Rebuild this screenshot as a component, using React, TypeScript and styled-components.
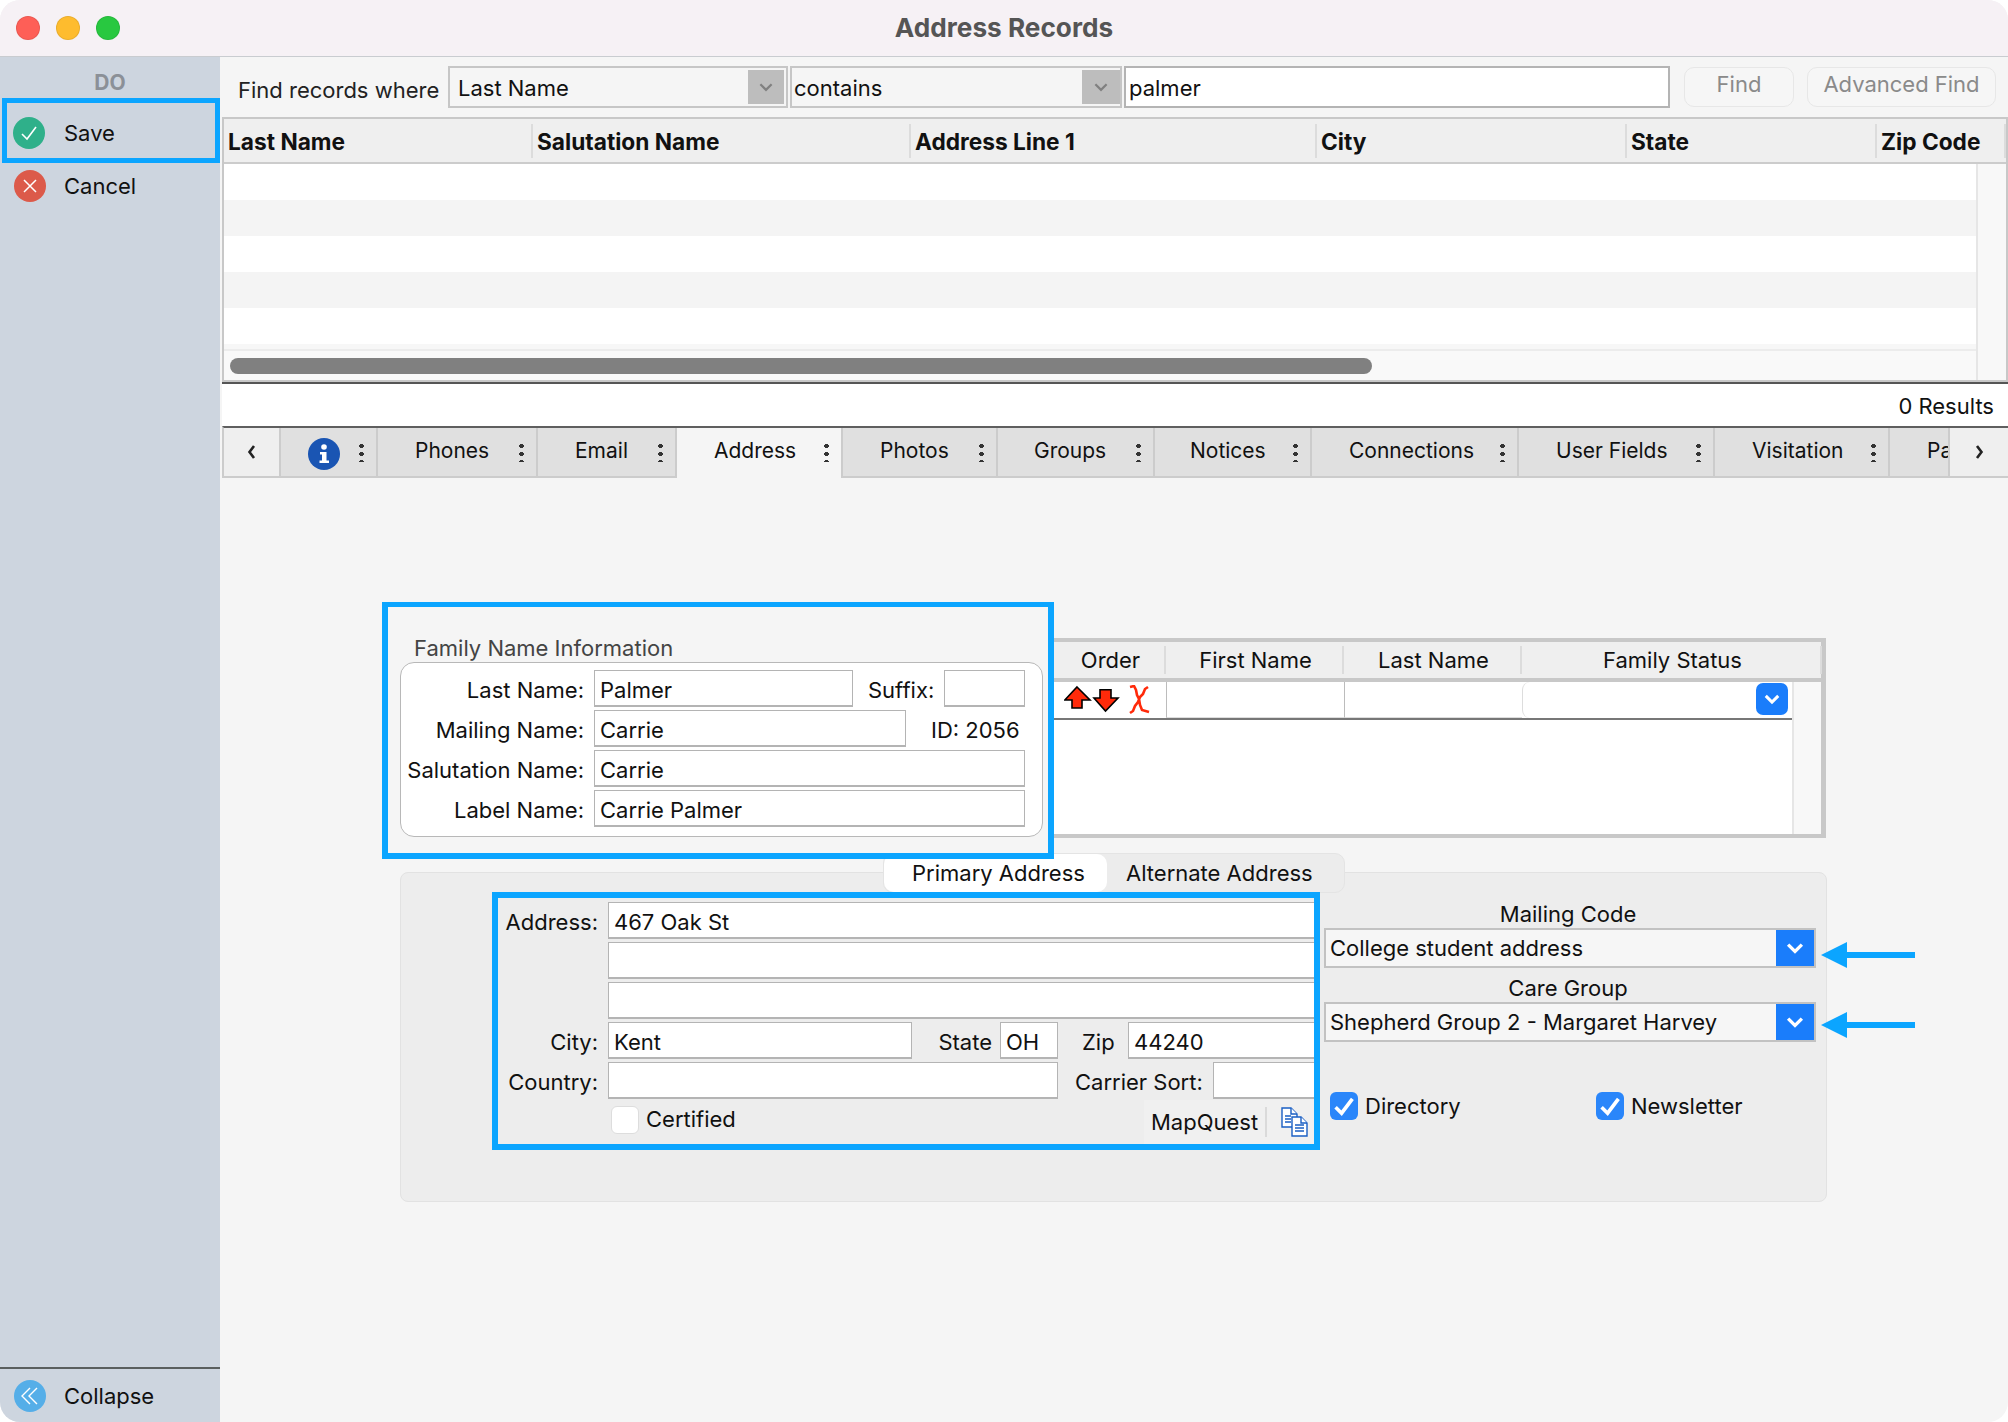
import * as React from 'react';
import styled, { createGlobalStyle } from 'styled-components';

const BLUE = '#0ba5ff';
const FONT = 'Inter, "Liberation Sans", sans-serif';

const GlobalStyle = createGlobalStyle`
  html, body { margin: 0; padding: 0; background: #fff; }
  body { font-family: ${FONT}; color: #111; font-size: 22px; }
  * { box-sizing: border-box; }
`;

const Window = styled.div`
  width: 2008px;
  height: 1422px;
  display: flex;
  flex-direction: column;
  border-radius: 20px;
  overflow: hidden;
  background: #f5f5f5;
`;

const TitleBar = styled.div`
  height: 57px;
  flex: none;
  display: flex;
  align-items: center;
  padding-left: 16px;
  background: #f6f1f5;
  border-bottom: 1px solid #c9ccd0;
`;

const Light = styled.span<{ $color: string }>`
  width: 24px;
  height: 24px;
  margin-right: 16px;
  border-radius: 50%;
  background: ${p => p.$color};
  border: 1px solid rgba(0, 0, 0, 0.08);
`;

const Title = styled.div`
  flex: 1;
  text-align: center;
  margin-left: -136px;
  padding-bottom: 2px;
  font-size: 26.2px;
  font-weight: 700;
  color: #555;
`;

const Body = styled.div`
  flex: 1;
  display: flex;
  min-height: 0;
`;

const Sidebar = styled.div`
  width: 220px;
  flex: none;
  display: flex;
  flex-direction: column;
  background: #cdd5df;
`;

const SideHeading = styled.div`
  height: 41px;
  line-height: 52px;
  text-align: center;
  font-size: 21px;
  font-weight: 700;
  color: #8b9097;
`;

const SideItem = styled.div<{ $marked?: boolean }>`
  display: flex;
  align-items: center;
  gap: ${p => (p.$marked ? '19px' : '18px')};
  height: ${p => (p.$marked ? '65px' : '46px')};
  margin-left: ${p => (p.$marked ? '2px' : '0')};
  padding-left: ${p => (p.$marked ? '6px' : '14px')};
  padding-top: ${p => (p.$marked ? '5px' : '0')};
  border: ${p => (p.$marked ? `5px solid ${BLUE}` : 'none')};
`;

const Dot = styled.span<{ $color: string }>`
  width: 32px;
  height: 32px;
  flex: none;
  border-radius: 50%;
  background: ${p => p.$color};
  display: flex;
  align-items: center;
  justify-content: center;
`;

const SideSpacer = styled.div`
  flex: 1;
`;

const CollapseRow = styled.div`
  height: 55px;
  flex: none;
  display: flex;
  align-items: center;
  gap: 18px;
  padding: 0 0 0 14px;
  border-top: 2px solid #5a5f5f;
`;

const Main = styled.div`
  flex: 1;
  min-width: 0;
  display: flex;
  flex-direction: column;
`;

const FindRow = styled.div`
  height: 60px;
  flex: none;
  display: flex;
  align-items: flex-start;
  padding: 9px 12px 0 18px;
`;

const FindLabel = styled.div`
  width: 210px;
  height: 42px;
  line-height: 48px;
  color: #222;
  white-space: nowrap;
`;

const FindSelect = styled.div<{ $w: number; $pad: number; $inset: number }>`
  width: ${p => p.$w}px;
  height: 42px;
  margin-right: 2px;
  display: flex;
  align-items: center;
  justify-content: space-between;
  padding: 2px ${p => p.$inset}px 0 ${p => p.$pad}px;
  background: #f5f5f5;
  border: 2px solid #c6c6c6;
`;

const FindArrow = styled.span<{ $w: number }>`
  width: ${p => p.$w}px;
  height: 34px;
  flex: none;
  margin-top: -2px;
  display: flex;
  align-items: center;
  justify-content: center;
  background: #bdbdbd;
`;

const FindInput = styled.div`
  width: 546px;
  height: 42px;
  line-height: 40px;
  padding-left: 3px;
  background: #fff;
  border: 2px solid #b4b4b4;
`;

const FindButton = styled.div<{ $w: number }>`
  width: ${p => p.$w}px;
  height: 40px;
  margin-left: ${p => (p.$w > 150 ? '13px' : '14px')};
  margin-top: 1px;
  line-height: 32px;
  text-align: center;
  color: #8a8a8a;
  background: #f6f6f6;
  border: 1px solid #e7e7e7;
  border-radius: 10px;
`;

const Grid = styled.div`
  height: 265px;
  flex: none;
  margin-left: 2px;
  display: flex;
  flex-direction: column;
  border: 2px solid #c8c8c8;
`;

const GridHead = styled.div`
  height: 45px;
  flex: none;
  display: flex;
  align-items: center;
  background: #efefef;
  border-bottom: 2px solid #cccccc;
`;

const HeadCell = styled.div<{ $w: number }>`
  width: ${p => p.$w}px;
  flex: none;
  height: 34px;
  line-height: 36px;
  padding-left: 4px;
  font-size: 22.7px;
  font-weight: 700;
  white-space: nowrap;
  border-right: 2px solid #dcdcdc;
`;

const GridBody = styled.div`
  flex: 1;
  display: flex;
  min-height: 0;
`;

const RowsPane = styled.div`
  flex: 1;
  min-width: 0;
  display: flex;
  flex-direction: column;
`;

const GridRow = styled.div<{ $odd: boolean }>`
  height: 36px;
  flex: none;
  background: ${p => (p.$odd ? '#f4f4f4' : '#fff')};
`;

const ScrollGap = styled.div`
  height: 7px;
  flex: none;
  background: #f7f7f7;
  border-bottom: 2px solid #ececec;
`;

const HScroll = styled.div`
  flex: 1;
  padding: 7px 0 0 6px;
  background: #f9f9f9;
`;

const HThumb = styled.div`
  width: 1142px;
  height: 16px;
  border-radius: 8px;
  background: #808080;
`;

const VTrack = styled.div`
  width: 30px;
  flex: none;
  background: #f8f8f8;
  border-left: 2px solid #e6e6e6;
`;

const ResultsBar = styled.div`
  height: 44px;
  flex: none;
  margin-left: 2px;
  display: flex;
  align-items: center;
  justify-content: flex-end;
  padding: 2px 14px 0 0;
  background: #fff;
  border-top: 2px solid #555;
`;

const TabBar = styled.div`
  height: 52px;
  flex: none;
  margin-left: 2px;
  display: flex;
  background: #e0e0e0;
  border-top: 2px solid #5f5f5f;
  border-bottom: 2px solid #cccccc;
  border-left: 2px solid #cccccc;
`;

const Tab = styled.div<{ $w: number; $active?: boolean; $pad?: number }>`
  width: ${p => p.$w}px;
  flex: none;
  display: flex;
  align-items: center;
  padding: 0 12px ${p => (p.$active ? 6 : 4)}px ${p => p.$pad ?? 37}px;
  overflow: hidden;
  white-space: nowrap;
  font-size: 21px;
  background: ${p => (p.$active ? '#f5f5f5' : '#e0e0e0')};
  border-right: 2px solid #cccccc;
  margin-bottom: ${p => (p.$active ? '-2px' : '0')};
`;

const NavTab = styled.div<{ $w: number; $last?: boolean }>`
  width: ${p => p.$w}px;
  flex: none;
  display: flex;
  align-items: center;
  justify-content: center;
  background: #efefef;
  border-right: ${p => (p.$last ? 'none' : '2px solid #cccccc')};
`;

const InfoSlot = styled.span`
  display: flex;
  margin-top: 8px;
`;

const Dots = styled.span`
  width: 5px;
  height: 20px;
  flex: none;
  margin: 4px 0 0 auto;
  background: radial-gradient(circle, #333 2.1px, transparent 2.5px) center top / 5px 8px repeat-y;
`;

const Content = styled.div`
  flex: 1;
  display: flex;
  flex-direction: column;
  padding: 124px 0 0 162px;
`;

const TopRow = styled.div`
  display: flex;
  align-items: flex-start;
`;

const FamilyBox = styled.div`
  width: 672px;
  height: 257px;
  flex: none;
  padding: 0 6px;
  border: 6px solid ${BLUE};
  border-top-width: 5px;
  position: relative;
  z-index: 1;
`;

const FamilyTitle = styled.div`
  height: 55px;
  padding: 29px 0 0 20px;
  line-height: 24px;
  color: #444;
`;

const FamilyPanel = styled.div`
  width: 643px;
  height: 175px;
  margin-left: 6px;
  padding-top: 7px;
  background: #fff;
  border: 1px solid #b8b8b8;
  border-radius: 14px;
`;

const FormRow = styled.div`
  display: flex;
  align-items: center;
  height: 37px;
  margin-bottom: 3px;
`;

const FormLabel = styled.div<{ $w: number; $gap: number; $left?: number }>`
  width: ${p => p.$w}px;
  flex: none;
  margin-left: ${p => p.$left ?? 0}px;
  margin-right: ${p => p.$gap}px;
  padding-top: 2px;
  text-align: right;
  white-space: nowrap;
`;

const Field = styled.div<{ $w?: number; $open?: boolean }>`
  width: ${p => (p.$w ? `${p.$w}px` : 'auto')};
  flex: ${p => (p.$w ? 'none' : 1)};
  height: 37px;
  line-height: 38px;
  padding-left: 5px;
  background: #fff;
  border: 1px solid #b4b4b4;
  border-bottom-width: 2px;
  border-right-width: ${p => (p.$open ? 0 : 1)}px;
`;

const IdLabel = styled.div`
  margin-left: 25px;
  padding-top: 2px;
  white-space: nowrap;
`;

const ChildGrid = styled.div`
  width: 772px;
  height: 200px;
  flex: none;
  margin-top: 36px;
  display: flex;
  flex-direction: column;
  border: 5px solid #c8c8c8;
  border-top-width: 4px;
  border-bottom-width: 4px;
  border-left: none;
`;

const ChildHead = styled.div`
  height: 40px;
  flex: none;
  display: flex;
  align-items: center;
  background: #efefef;
  border-bottom: 4px solid #c8c8c8;
`;

const ChildHeadCell = styled.div<{ $w: number }>`
  width: ${p => p.$w}px;
  flex: none;
  height: 28px;
  line-height: 28px;
  padding-left: 3px;
  text-align: center;
  border-right: 2px solid #dcdcdc;
`;

const ChildBody = styled.div`
  flex: 1;
  display: flex;
  min-height: 0;
`;

const ChildRows = styled.div`
  flex: 1;
  min-width: 0;
  background: #fff;
`;

const ChildRow = styled.div`
  height: 38px;
  display: flex;
  border-bottom: 2px solid #777;
`;

const OrderCell = styled.div`
  width: 112px;
  flex: none;
  display: flex;
  align-items: center;
  padding-left: 10px;
  background: #fff;
`;

const ChildCell = styled.div`
  width: 178px;
  flex: none;
  background: #fff;
  border-left: 1px solid #bcbcbc;
  border-bottom: 1px solid #ddd;
`;

const StatusCell = styled.div`
  flex: 1;
  display: flex;
  justify-content: flex-end;
  padding: 1px 4px 0 0;
  border-left: 1px solid #ddd;
  border-radius: 8px;
`;

const StatusButton = styled.span`
  width: 32px;
  height: 32px;
  display: flex;
  align-items: center;
  justify-content: center;
  background: #1a7dfb;
  border-radius: 7px;
`;

const ChildTrack = styled.div`
  width: 29px;
  flex: none;
  background: #f8f8f8;
  border-left: 2px solid #e6e6e6;
`;

const Panel = styled.div`
  width: 1427px;
  height: 330px;
  flex: none;
  margin: 13px 0 0 18px;
  padding: 19px 0 0 91px;
  display: flex;
  align-items: flex-start;
  background: #ededed;
  border: 1px solid #e2e2e2;
  border-radius: 8px;
  position: relative;
`;

const SubTabs = styled.div`
  position: absolute;
  left: 482px;
  top: -20px;
  width: 462px;
  height: 40px;
  display: flex;
  align-items: center;
  background: #ececec;
  border: 1px solid #e4e4e4;
  border-radius: 10px;
`;

const SubTab = styled.div<{ $active?: boolean; $w: number; $pad: number }>`
  width: ${p => p.$w}px;
  height: 38px;
  line-height: 39px;
  padding-left: ${p => p.$pad}px;
  white-space: nowrap;
  background: ${p => (p.$active ? '#fff' : 'transparent')};
  border-radius: 10px;
`;

const AddressBox = styled.div`
  width: 828px;
  height: 258px;
  flex: none;
  padding-top: 4px;
  border: 6px solid ${BLUE};
  position: relative;
  z-index: 1;
`;

const LastRow = styled.div`
  display: flex;
  align-items: flex-start;
  margin-top: 1px;
  padding-left: 113px;
`;

const CheckBlank = styled.span`
  width: 28px;
  height: 28px;
  flex: none;
  margin-top: 4px;
  background: #fff;
  border: 1px solid #ddd;
  border-radius: 6px;
`;

const CertifiedLabel = styled.span`
  margin-left: 7px;
  margin-top: 4px;
  flex: 1;
`;

const MapQuestBtn = styled.div`
  width: 170px;
  height: 44px;
  flex: none;
  margin-top: -2px;
  display: flex;
  align-items: center;
  padding-left: 7px;
  background: #f0f0f0;
`;

const BtnDivider = styled.span`
  width: 2px;
  height: 30px;
  margin: 0 14px 0 7px;
  background: #dadada;
`;

const RightCol = styled.div`
  width: 492px;
  flex: none;
  margin-left: 4px;
  padding-top: 9px;
`;

const SelectCaption = styled.div`
  height: 27px;
  line-height: 26px;
  padding-right: 4px;
  text-align: center;
`;

const ComboBox = styled.div`
  height: 40px;
  margin-bottom: 7px;
  display: flex;
  align-items: center;
  justify-content: space-between;
  padding-left: 4px;
  background: #f6f6f6;
  border: 2px solid #c2c2c2;
  white-space: nowrap;
  position: relative;
`;

const ComboArrow = styled.span`
  width: 38px;
  height: 36px;
  flex: none;
  display: flex;
  align-items: center;
  justify-content: center;
  background: #1a7dfb;
`;

const Callout = styled.svg<{ $top: number }>`
  position: absolute;
  left: 495px;
  top: ${p => p.$top}px;
`;

const CheckRow = styled.div`
  display: flex;
  margin-top: 50px;
  padding-left: 6px;
`;

const CheckItem = styled.div`
  width: 266px;
  flex: none;
  display: flex;
  align-items: center;
  gap: 7px;
`;

const CheckOn = styled.span`
  width: 28px;
  height: 28px;
  flex: none;
  display: flex;
  align-items: center;
  justify-content: center;
  background: #2a86fa;
  border-radius: 6px;
`;

const Check = ({ size = 20, w = 1.6 }: { size?: number; w?: number }) => (
  <svg width={size} height={size} viewBox="0 0 20 20" fill="none" stroke="#fff" strokeWidth={w}>
    <path d="M3 11 L8 16 L17 4" />
  </svg>
);

const Cross = () => (
  <svg width="20" height="20" viewBox="0 0 20 20" fill="none" stroke="#fff" strokeWidth="1.5">
    <path d="M4 4 L16 16 M16 4 L4 16" />
  </svg>
);

const Chevrons = () => (
  <svg width="22" height="22" viewBox="0 0 22 22" fill="none" stroke="#fff" strokeWidth="1.4">
    <path d="M11 3 L3 11 L11 19 M18 3 L10 11 L18 19" />
  </svg>
);

const InfoIcon = () => (
  <svg width="32" height="32" viewBox="0 0 32 32">
    <circle cx="16" cy="16" r="16" fill="#1a55b3" />
    <circle cx="16" cy="9" r="2.8" fill="#fff" />
    <path d="M12 14 H18.5 V22.5 H21 V25 H11.5 V22.5 H14 V16.5 H12 Z" fill="#fff" />
  </svg>
);

const Chevron = ({ color = '#fff', size = 20, w = 2.4 }: { color?: string; size?: number; w?: number }) => (
  <svg width={size} height={size} viewBox="0 0 16 16" fill="none" stroke={color} strokeWidth={w}>
    <path d="M3 5.5 L8 10.5 L13 5.5" />
  </svg>
);

const NavArrow = ({ dir }: { dir: 'left' | 'right' }) => (
  <svg width="9" height="14" viewBox="0 0 9 14" fill="none" stroke="#222" strokeWidth="2.6">
    <path d={dir === 'left' ? 'M7 1 L2.5 7 L7 13' : 'M2 1 L6.5 7 L2 13'} />
  </svg>
);

const OrderIcons = () => (
  <svg width="87" height="30" viewBox="0 0 87 30">
    <path d="M13 2 L26 15 H18 V23 H8 V15 H0.8 Z" fill="#ff2a0a" stroke="#000" strokeWidth="1.6" />
    <path d="M36 4.8 H47 V13 H54 L41.5 26 L30 13 H36 Z" fill="#ff2a0a" stroke="#000" strokeWidth="1.6" />
    <path d="M66 2 L70 1 L72 5 L73 10 L75 14 L76 20 L78 25 L85 27 M84 2 L81 4 L79 9 L76 12 L74 17 L71 21 L69 26 L66 28" fill="none" stroke="#ff2a0a" strokeWidth="2.6" />
  </svg>
);

const DocsIcon = () => (
  <svg width="28" height="30" viewBox="0 0 28 30" fill="#fff" stroke="#1a5fc4" strokeWidth="1.4">
    <path d="M1 1 H10 L16 7 V20 H1 Z" />
    <path d="M10 1 V7 H16" />
    <path d="M4 9 H10 M4 12 H10 M4 15 H10" strokeWidth="1.6" />
    <path d="M11 10 H20 L26 16 V29 H11 Z" />
    <path d="M20 10 V16 H26" />
    <path d="M14 18 H23 M14 21 H23 M14 24 H23" strokeWidth="1.6" />
  </svg>
);

const ArrowMark = ({ top }: { top: number }) => (
  <Callout $top={top} width="94" height="26" viewBox="0 0 94 26">
    <path d="M0 13 L26 0 V10 H94 V16 H26 V26 Z" fill={BLUE} />
  </Callout>
);

const COLUMNS = [
  { name: 'Last Name', w: 309 },
  { name: 'Salutation Name', w: 378 },
  { name: 'Address Line 1', w: 406 },
  { name: 'City', w: 310 },
  { name: 'State', w: 250 },
  { name: 'Zip Code', w: 129 },
];

const TABS = [
  { name: 'Phones', w: 160 },
  { name: 'Email', w: 139 },
  { name: 'Address', w: 166, active: true },
  { name: 'Photos', w: 155 },
  { name: 'Groups', w: 157, pad: 36 },
  { name: 'Notices', w: 157, pad: 35 },
  { name: 'Connections', w: 207 },
  { name: 'User Fields', w: 196 },
  { name: 'Visitation', w: 175 },
];

export default function App() {
  return (
    <>
      <GlobalStyle />
      <Window>
        <TitleBar>
          <Light $color="#fe5f57" />
          <Light $color="#febc2e" />
          <Light $color="#28c840" />
          <Title>Address Records</Title>
        </TitleBar>
        <Body>
          <Sidebar>
            <SideHeading>DO</SideHeading>
            <SideItem $marked>
              <Dot $color="#2fb08a"><Check /></Dot>
              Save
            </SideItem>
            <SideItem>
              <Dot $color="#dc5a4a"><Cross /></Dot>
              Cancel
            </SideItem>
            <SideSpacer />
            <CollapseRow>
              <Dot $color="#55aee8"><Chevrons /></Dot>
              Collapse
            </CollapseRow>
          </Sidebar>
          <Main>
            <FindRow>
              <FindLabel>Find records where</FindLabel>
              <FindSelect $w={340} $pad={8} $inset={2}>
                Last Name
                <FindArrow $w={36}><Chevron color="#808080" size={18} w={2} /></FindArrow>
              </FindSelect>
              <FindSelect $w={332} $pad={2} $inset={0}>
                contains
                <FindArrow $w={38}><Chevron color="#808080" size={18} w={2} /></FindArrow>
              </FindSelect>
              <FindInput>palmer</FindInput>
              <FindButton $w={110}>Find</FindButton>
              <FindButton $w={189}>Advanced Find</FindButton>
            </FindRow>
            <Grid>
              <GridHead>
                {COLUMNS.map(c => (
                  <HeadCell key={c.name} $w={c.w}>{c.name}</HeadCell>
                ))}
              </GridHead>
              <GridBody>
                <RowsPane>
                  {[0, 1, 2, 3, 4].map(i => (
                    <GridRow key={i} $odd={i % 2 === 1} />
                  ))}
                  <ScrollGap />
                  <HScroll><HThumb /></HScroll>
                </RowsPane>
                <VTrack />
              </GridBody>
            </Grid>
            <ResultsBar>0 Results</ResultsBar>
            <TabBar>
              <NavTab $w={57}><NavArrow dir="left" /></NavTab>
              <Tab $w={97} $pad={27}><InfoSlot><InfoIcon /></InfoSlot><Dots /></Tab>
              {TABS.map(t => (
                <Tab key={t.name} $w={t.w} $active={t.active} $pad={t.pad}>
                  {t.name}
                  <Dots />
                </Tab>
              ))}
              <Tab $w={60}>Pa</Tab>
              <NavTab $w={58} $last><NavArrow dir="right" /></NavTab>
            </TabBar>
            <Content>
              <TopRow>
                <FamilyBox>
                  <FamilyTitle>Family Name Information</FamilyTitle>
                  <FamilyPanel>
                    <FormRow>
                      <FormLabel $w={183} $gap={10}>Last Name:</FormLabel>
                      <Field $w={259}>Palmer</Field>
                      <FormLabel $w={66} $gap={10} $left={15}>Suffix:</FormLabel>
                      <Field $w={81} />
                    </FormRow>
                    <FormRow>
                      <FormLabel $w={183} $gap={10}>Mailing Name:</FormLabel>
                      <Field $w={312}>Carrie</Field>
                      <IdLabel>ID: 2056</IdLabel>
                    </FormRow>
                    <FormRow>
                      <FormLabel $w={183} $gap={10}>Salutation Name:</FormLabel>
                      <Field $w={431}>Carrie</Field>
                    </FormRow>
                    <FormRow>
                      <FormLabel $w={183} $gap={10}>Label Name:</FormLabel>
                      <Field $w={431}>Carrie Palmer</Field>
                    </FormRow>
                  </FamilyPanel>
                </FamilyBox>
                <ChildGrid>
                  <ChildHead>
                    <ChildHeadCell $w={112}>Order</ChildHeadCell>
                    <ChildHeadCell $w={178}>First Name</ChildHeadCell>
                    <ChildHeadCell $w={178}>Last Name</ChildHeadCell>
                    <ChildHeadCell $w={300}>Family Status</ChildHeadCell>
                  </ChildHead>
                  <ChildBody>
                    <ChildRows>
                      <ChildRow>
                        <OrderCell><OrderIcons /></OrderCell>
                        <ChildCell />
                        <ChildCell />
                        <StatusCell>
                          <StatusButton><Chevron /></StatusButton>
                        </StatusCell>
                      </ChildRow>
                    </ChildRows>
                    <ChildTrack />
                  </ChildBody>
                </ChildGrid>
              </TopRow>
              <Panel>
                <SubTabs>
                  <SubTab $active $w={223} $pad={28}>Primary Address</SubTab>
                  <SubTab $w={237} $pad={19}>Alternate Address</SubTab>
                </SubTabs>
                <AddressBox>
                  <FormRow>
                    <FormLabel $w={100} $gap={10}>Address:</FormLabel>
                    <Field $open>467 Oak St</Field>
                  </FormRow>
                  <FormRow>
                    <FormLabel $w={100} $gap={10} />
                    <Field $open />
                  </FormRow>
                  <FormRow>
                    <FormLabel $w={100} $gap={10} />
                    <Field $open />
                  </FormRow>
                  <FormRow>
                    <FormLabel $w={100} $gap={10}>City:</FormLabel>
                    <Field $w={304}>Kent</Field>
                    <FormLabel $w={54} $gap={8} $left={26}>State</FormLabel>
                    <Field $w={58}>OH</Field>
                    <FormLabel $w={32} $gap={14} $left={24}>Zip</FormLabel>
                    <Field $open>44240</Field>
                  </FormRow>
                  <FormRow>
                    <FormLabel $w={100} $gap={10}>Country:</FormLabel>
                    <Field $w={450} />
                    <FormLabel $w={127} $gap={11} $left={17}>Carrier Sort:</FormLabel>
                    <Field $open />
                  </FormRow>
                  <LastRow>
                    <CheckBlank />
                    <CertifiedLabel>Certified</CertifiedLabel>
                    <MapQuestBtn>
                      MapQuest
                      <BtnDivider />
                      <DocsIcon />
                    </MapQuestBtn>
                  </LastRow>
                </AddressBox>
                <RightCol>
                  <SelectCaption>Mailing Code</SelectCaption>
                  <ComboBox>
                    College student address
                    <ComboArrow><Chevron size={22} /></ComboArrow>
                    <ArrowMark top={12} />
                  </ComboBox>
                  <SelectCaption>Care Group</SelectCaption>
                  <ComboBox>
                    Shepherd Group 2 - Margaret Harvey
                    <ComboArrow><Chevron size={22} /></ComboArrow>
                    <ArrowMark top={8} />
                  </ComboBox>
                  <CheckRow>
                    <CheckItem><CheckOn><Check size={24} w={3} /></CheckOn>Directory</CheckItem>
                    <CheckItem><CheckOn><Check size={24} w={3} /></CheckOn>Newsletter</CheckItem>
                  </CheckRow>
                </RightCol>
              </Panel>
            </Content>
          </Main>
        </Body>
      </Window>
    </>
  );
}
